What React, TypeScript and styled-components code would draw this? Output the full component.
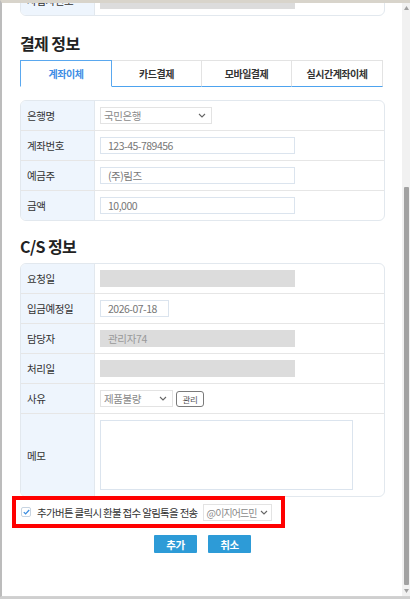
import React from 'react';
import styled, { createGlobalStyle } from 'styled-components';

const GlobalStyle = createGlobalStyle`
  html, body { margin: 0; padding: 0; background: #cfcfcf; overflow: hidden; }
  body { font-family: "Noto Sans CJK KR", "Noto Sans", sans-serif; }
  * { box-sizing: border-box; }
`;

const Window = styled.div`
  width: 410px;
  height: 597px;
  display: flex;
  background: #fff;
  border-top: 3px solid #d8d4cb;
  border-left: 2px solid #bcbcbc;
  border-bottom: 1px solid #d2d2d2;
`;

const Viewport = styled.div`
  flex: 1;
  overflow: hidden;
`;

const Page = styled.div`
  display: flex;
  flex-direction: column;
  padding: 0 17px 0 18px;
  margin-top: -18px;
`;

const Heading = styled.h2<{ $mt: number }>`
  margin: ${p => p.$mt}px 0 0;
  height: 20px;
  line-height: 20px;
  font-size: 16px;
  font-weight: 700;
  letter-spacing: -0.6px;
  color: #222;
`;

const Card = styled.div<{ $mt: number }>`
  margin-top: ${p => p.$mt}px;
  border: 1px solid #e2e8ee;
  border-radius: 6px;
  overflow: hidden;
  background: #fff;
`;

const Row = styled.div<{ $h?: number }>`
  display: flex;
  height: ${p => p.$h ?? 30}px;
  border-top: 1px solid #e6e6e6;
  &:first-child {
    border-top: 0;
    height: 29px;
  }
`;

const Label = styled.div`
  flex: none;
  width: 74px;
  display: flex;
  align-items: center;
  padding-left: 6px;
  background: #eef5fd;
  border-right: 1px solid #e2e8ee;
  font-size: 10.5px;
  letter-spacing: -0.4px;
  color: #333;
`;

const Value = styled.div`
  flex: 1;
  display: flex;
  align-items: center;
  gap: 3px;
  padding-left: 5px;
`;

const TextInput = styled.input<{ $w: number }>`
  width: ${p => p.$w}px;
  height: 17px;
  border: 1px solid #dbe4ee;
  padding: 0 0 0 7px;
  font-family: inherit;
  font-size: 10.5px;
  letter-spacing: -0.5px;
  color: #777;
  background: #fff;
  outline: none;
`;

const Blank = styled.div`
  width: 195px;
  height: 17px;
  display: flex;
  align-items: center;
  padding-left: 8px;
  background: #dcdcdc;
  font-size: 10.5px;
  letter-spacing: -0.3px;
  color: #999;
`;

const SelectBox = styled.div<{ $w: number; $ml?: number; $tight?: boolean }>`
  width: ${p => p.$w}px;
  height: 17px;
  margin-left: ${p => p.$ml ?? 0}px;
  display: flex;
  align-items: center;
  justify-content: space-between;
  padding: 0 ${p => (p.$tight ? 3 : 5)}px 0 3px;
  border: 1px solid #e3e3e3;
  background: #fff;
  font-size: ${p => (p.$tight ? 10 : 10.5)}px;
  letter-spacing: ${p => (p.$tight ? -0.9 : -0.4)}px;
  color: #8a8a8a;
  white-space: nowrap;
  overflow: hidden;
`;

const SmallButton = styled.button`
  width: 28px;
  height: 16px;
  padding: 0;
  border: 1px solid #7a7a7a;
  border-radius: 3px;
  background: #fff;
  font-family: inherit;
  font-size: 8.5px;
  letter-spacing: -0.3px;
  color: #555;
`;

const Memo = styled.textarea`
  width: 253px;
  height: 70px;
  border: 1px solid #dbe4ee;
  resize: none;
  outline: none;
  font-family: inherit;
`;

const Tabs = styled.div`
  margin-top: 7px;
  display: grid;
  grid-template-columns: 92px 90px 90px 91px;
`;

const Tab = styled.div<{ $active?: boolean }>`
  height: 27px;
  display: flex;
  align-items: center;
  justify-content: center;
  font-size: 10px;
  font-weight: 700;
  letter-spacing: -0.5px;
  color: ${p => (p.$active ? '#3d8de5' : '#333')};
  background: #fff;
  border-top: 1px solid ${p => (p.$active ? '#5aa8ef' : '#e3e3e3')};
  border-right: 1px solid ${p => (p.$active ? '#5aa8ef' : '#e3e3e3')};
  border-left: ${p => (p.$active ? '1px solid #5aa8ef' : '0')};
  border-bottom: 1px solid ${p => (p.$active ? '#fff' : '#4da3ef')};
`;

const Notice = styled.div`
  margin: -1px 0 0 -8px;
  width: 273px;
  height: 32px;
  display: flex;
  align-items: center;
  padding-left: 5px;
  border: 4px solid #ff0000;
`;

const Check = styled.span`
  width: 10px;
  height: 10px;
  display: flex;
  align-items: center;
  justify-content: center;
  border: 1px solid #c7d4e1;
  border-radius: 2px;
  background: #fff;
`;

const NoticeText = styled.span`
  margin-left: 6px;
  font-size: 10.5px;
  letter-spacing: -0.7px;
  color: #333;
  white-space: nowrap;
`;

const Actions = styled.div`
  margin-top: 7px;
  display: flex;
  justify-content: center;
  gap: 11px;
`;

const ActionButton = styled.button`
  width: 43px;
  height: 18px;
  padding: 0;
  border: none;
  border-radius: 1px;
  background: #2d9bd7;
  color: #fff;
  font-family: inherit;
  font-size: 10.5px;
  font-weight: 700;
  letter-spacing: -0.3px;
`;

const Scrollbar = styled.div`
  flex: none;
  width: 8px;
  display: flex;
  flex-direction: column;
  background: #f1f1f1;
`;

const ScrollArrow = styled.div`
  height: 10px;
  display: flex;
  align-items: center;
  justify-content: center;
`;

const ScrollTrack = styled.div<{ $offset: number }>`
  flex: 1;
  display: flex;
  flex-direction: column;
  padding: ${p => p.$offset}px 1px 1px 2px;
`;

const Thumb = styled.div`
  flex: 1;
  background: #a2a2a2;
  border-radius: 1px;
`;

const Chevron = () => (
  <svg width="8" height="5" viewBox="0 0 8 5" style={{ flex: 'none' }}>
    <path d="M1 1l3 3 3-3" fill="none" stroke="#666" strokeWidth="1.1" />
  </svg>
);

const CheckMark = () => (
  <svg width="7" height="6" viewBox="0 0 7 6">
    <path d="M0.8 3.1l1.8 1.8L6.2 1" fill="none" stroke="#3b8de0" strokeWidth="1.3" />
  </svg>
);

const Triangle = ({ up }: { up?: boolean }) => (
  <svg width="5" height="4" viewBox="0 0 5 4">
    <path d={up ? 'M0 4L2.5 0 5 4z' : 'M0 0L2.5 4 5 0z'} fill="#a0a0a0" />
  </svg>
);

export default function App() {
  return (
    <>
      <GlobalStyle />
      <Window>
        <Viewport>
          <Page>
            <Card $mt={0}>
              <Row>
                <Label>사업자번호</Label>
                <Value>
                  <Blank />
                </Value>
              </Row>
            </Card>

            <Heading $mt={17}>결제 정보</Heading>
            <Tabs>
              <Tab $active>계좌이체</Tab>
              <Tab>카드결제</Tab>
              <Tab>모바일결제</Tab>
              <Tab>실시간계좌이체</Tab>
            </Tabs>

            <Card $mt={13}>
              <Row>
                <Label>은행명</Label>
                <Value>
                  <SelectBox $w={112}>
                    국민은행
                    <Chevron />
                  </SelectBox>
                </Value>
              </Row>
              <Row>
                <Label>계좌번호</Label>
                <Value>
                  <TextInput $w={195} readOnly value="123-45-789456" />
                </Value>
              </Row>
              <Row>
                <Label>예금주</Label>
                <Value>
                  <TextInput $w={195} readOnly value="(주)림즈" />
                </Value>
              </Row>
              <Row>
                <Label>금액</Label>
                <Value>
                  <TextInput $w={195} readOnly value="10,000" />
                </Value>
              </Row>
            </Card>

            <Heading $mt={15}>C/S 정보</Heading>
            <Card $mt={7}>
              <Row>
                <Label>요청일</Label>
                <Value>
                  <Blank />
                </Value>
              </Row>
              <Row>
                <Label>입금예정일</Label>
                <Value>
                  <TextInput $w={69} readOnly value="2026-07-18" />
                </Value>
              </Row>
              <Row>
                <Label>담당자</Label>
                <Value>
                  <Blank>관리자74</Blank>
                </Value>
              </Row>
              <Row>
                <Label>처리일</Label>
                <Value>
                  <Blank />
                </Value>
              </Row>
              <Row>
                <Label>사유</Label>
                <Value>
                  <SelectBox $w={73}>
                    제품불량
                    <Chevron />
                  </SelectBox>
                  <SmallButton>관리</SmallButton>
                </Value>
              </Row>
              <Row $h={83}>
                <Label>메모</Label>
                <Value>
                  <Memo readOnly />
                </Value>
              </Row>
            </Card>

            <Notice>
              <Check>
                <CheckMark />
              </Check>
              <NoticeText>추가버튼 클릭시 환불 접수 알림톡을 전송</NoticeText>
              <SelectBox $w={69} $ml={5} $tight>
                @이지어드민
                <Chevron />
              </SelectBox>
            </Notice>

            <Actions>
              <ActionButton>추가</ActionButton>
              <ActionButton>취소</ActionButton>
            </Actions>
          </Page>
        </Viewport>
        <Scrollbar>
          <ScrollArrow>
            <Triangle up />
          </ScrollArrow>
          <ScrollTrack $offset={174}>
            <Thumb />
          </ScrollTrack>
          <ScrollArrow>
            <Triangle />
          </ScrollArrow>
        </Scrollbar>
      </Window>
    </>
  );
}
